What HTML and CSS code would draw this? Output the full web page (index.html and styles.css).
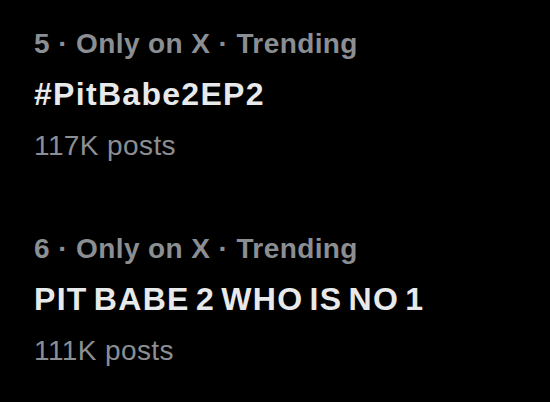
FILE: index.html
```html
<!DOCTYPE html>
<html lang="en">
<head>
    <meta charset="UTF-8">
    <meta name="viewport" content="width=device-width, initial-scale=1.0">
    <title>Trending</title>
    <link rel="stylesheet" href="styles.css">
</head>
<body>
    <div class="trend-list">
        <div class="trend">
            <div class="trend-meta">5 · Only on X · Trending</div>
            <div class="trend-name">#PitBabe2EP2</div>
            <div class="trend-count">117K posts</div>
        </div>
        <div class="trend">
            <div class="trend-meta">6 · Only on X · Trending</div>
            <div class="trend-name">PIT BABE 2 WHO IS NO 1</div>
            <div class="trend-count">111K posts</div>
        </div>
    </div>
</body>
</html>
```

FILE: styles.css
```css
body {
    margin: 0;
    padding: 0;
    background-color: #000;
    font-family: "Liberation Sans", Arial, sans-serif;
    height: 402px;
    overflow: hidden;
}
.trend-list {
    display: flex;
    flex-direction: column;
    gap: 52px;
    padding: 18px 0 0 34px;
}
.trend {
    display: flex;
    flex-direction: column;
}
.trend-meta {
    font-size: 28px;
    line-height: 51px;
    font-weight: bold;
    letter-spacing: 0.4px;
    color: #8b8e92;
}
.trend-name {
    font-size: 32px;
    line-height: 51px;
    font-weight: bold;
    letter-spacing: 1.3px;
    word-spacing: -4px;
    color: #e7e9ea;
}
.trend-count {
    font-size: 28px;
    line-height: 51px;
    letter-spacing: 0.4px;
    color: #8b8e92;
}
```
